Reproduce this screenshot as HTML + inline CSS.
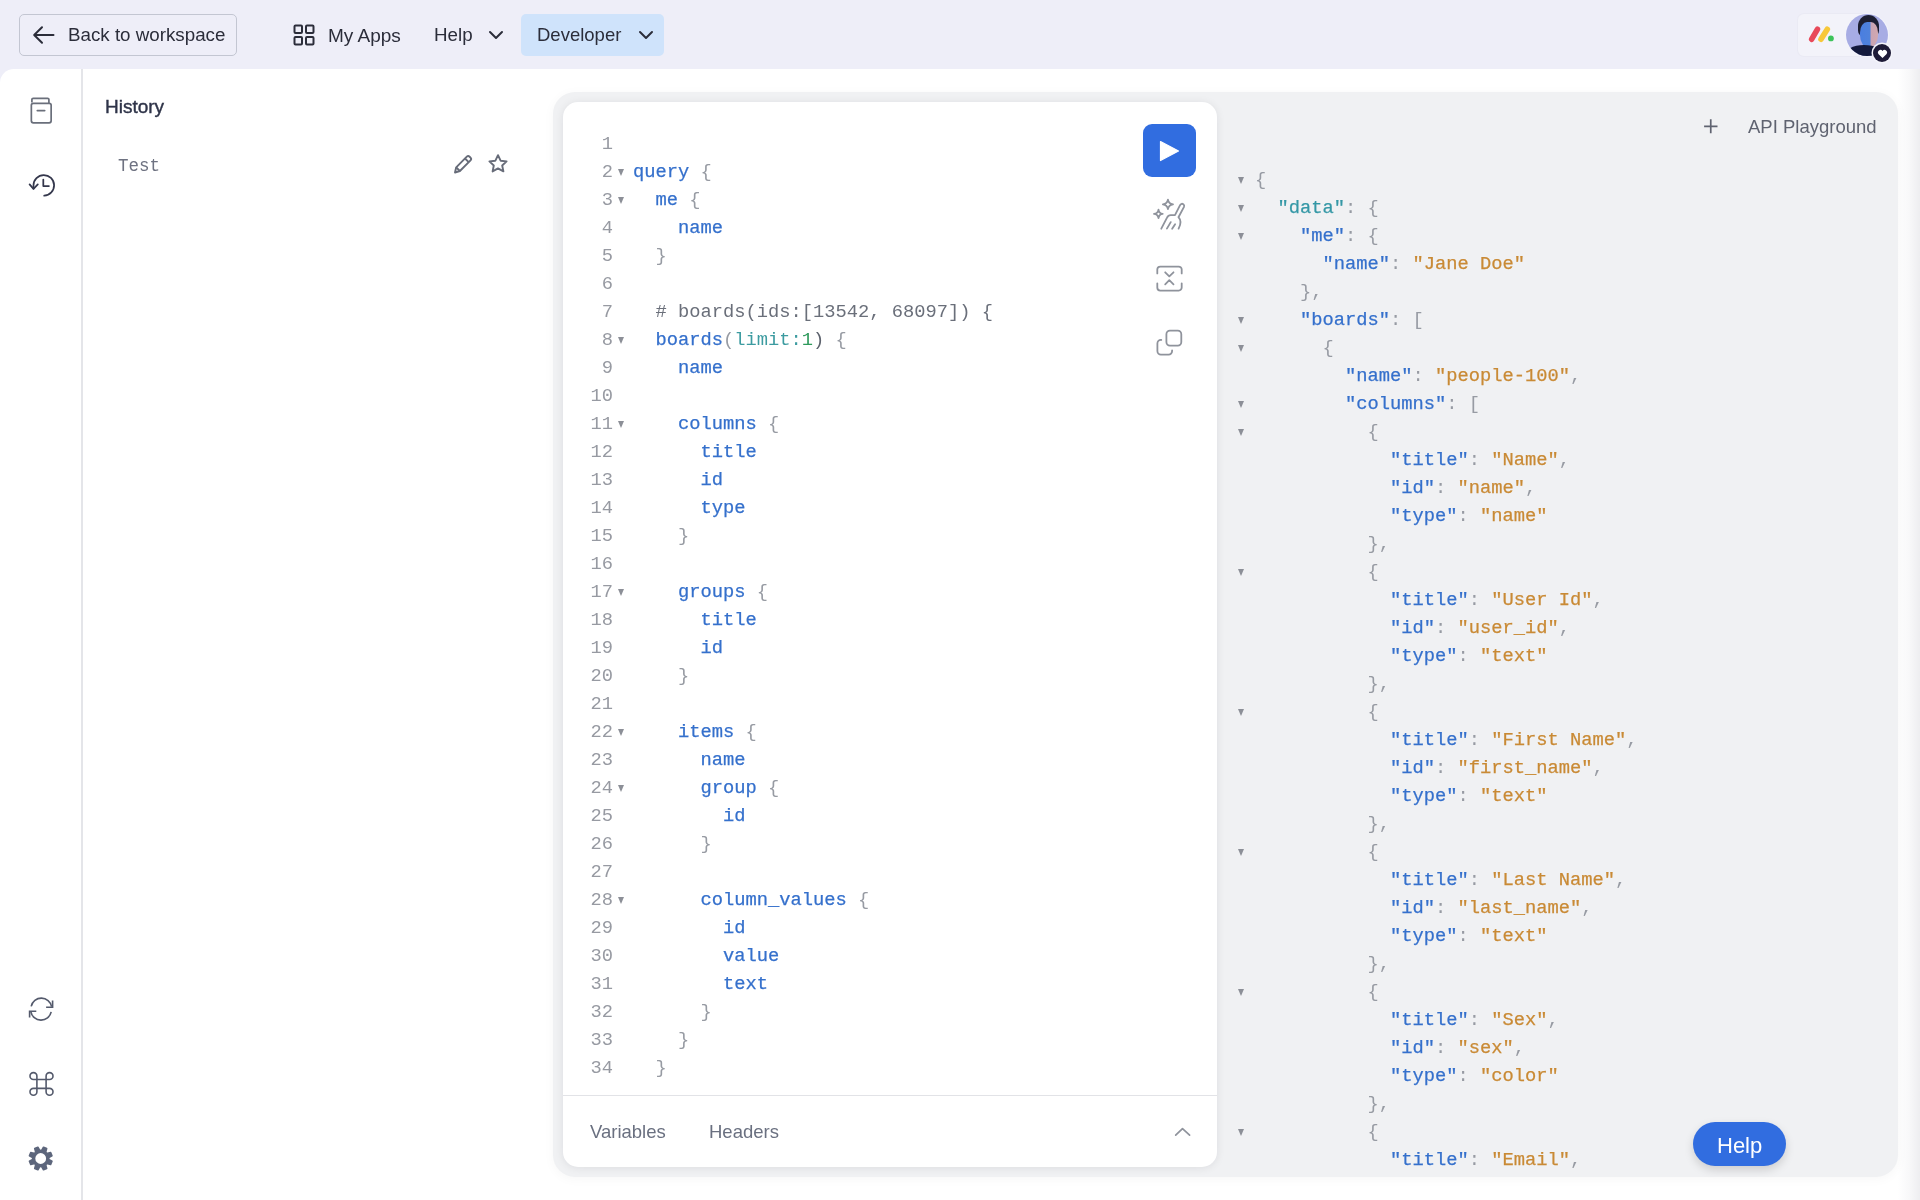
<!DOCTYPE html>
<html><head><meta charset="utf-8">
<style>
*{box-sizing:border-box;margin:0;padding:0}
html,body{width:1920px;height:1200px;overflow:hidden;-webkit-font-smoothing:antialiased;background:#eeeef8;font-family:"Liberation Sans",sans-serif;position:relative}
.abs{position:absolute}
.txt{position:absolute;white-space:pre;line-height:1;font-family:"Liberation Sans",sans-serif;will-change:transform}
#top{left:0;top:0;width:1920px;height:70px;background:#eeeef8}
#backbtn{left:19px;top:13.5px;width:218px;height:42px;border:1px solid #c3c6d2;border-radius:5px}
#devbtn{left:521px;top:13.5px;width:143px;height:42px;background:#cfe3fb;border-radius:5px}
#logobox{left:1797.5px;top:13.5px;width:75px;height:42.5px;background:#f3f3fa;border-radius:6px;box-shadow:0 0 0 1px rgba(225,226,238,0.35)}
#main{left:0;top:69px;width:1920px;height:1131px;background:#fff;border-top-left-radius:14px}
#rail{left:81px;top:69px;width:2px;height:1131px;background:#e4e5e9}
#outer{left:553px;top:92px;width:1344.5px;height:1084.7px;background:#f0f1f3;border-radius:22px;box-shadow:0 2px 12px rgba(0,0,0,0.035)}
#card{left:563px;top:102.3px;width:654px;height:1064.7px;background:#fff;border-radius:15px;box-shadow:0 1px 8px rgba(20,20,40,0.085)}
#divider{left:563px;top:1094.8px;width:654px;height:1.2px;background:#e2e3e7}
.code{position:absolute;font-family:"Liberation Mono",monospace;font-size:18.75px;line-height:28px;white-space:pre;color:#8e929a;will-change:transform}
.ln{color:#979aa2}
.k{color:#3570cc;-webkit-text-stroke:0.25px #3570cc}
.p{color:#979ba3}
.c{color:#6a6f7a}
.t{color:#3c9ba0}
.n{color:#2f9a5c}
.d{color:#5d626d}
.jk{color:#3570cc;-webkit-text-stroke:0.25px #3570cc}
.jd{color:#3598a6;-webkit-text-stroke:0.25px #3598a6}
.js{color:#c98a35;-webkit-text-stroke:0.25px #c98a35}
.tri{position:absolute;width:0;height:0;border-left:3.5px solid transparent;border-right:3.5px solid transparent;border-top:7px solid #8c8f97}
#play{left:1143px;top:124px;width:53px;height:53px;background:#316de0;border-radius:9px}
#help{left:1693px;top:1122px;width:93px;height:44px;background:#316de0;border-radius:22px;box-shadow:0 4px 10px rgba(0,0,0,0.15)}
</style></head><body>
<div id="top" class="abs"></div>
<div id="backbtn" class="abs"></div>
<svg class="abs" style="left:30px;top:22px" width="26" height="26" viewBox="0 0 26 26"><path d="M23.5 13H4.5M12 5.2L4.2 13l7.8 7.8" fill="none" stroke="#2b2d3a" stroke-width="2" stroke-linecap="round" stroke-linejoin="round"/></svg>
<div class="txt" style="left:68.3px;top:26.2px;font-size:18.75px;color:#2b2d3a">Back to workspace</div>
<svg class="abs" style="left:292px;top:23px" width="24" height="24" viewBox="0 0 24 24"><g fill="none" stroke="#2b2d3a" stroke-width="2"><rect x="2.5" y="2.5" width="7.5" height="7.5" rx="1"/><rect x="14" y="2.5" width="7.5" height="7.5" rx="1"/><rect x="2.5" y="14" width="7.5" height="7.5" rx="1"/><rect x="14" y="14" width="7.5" height="7.5" rx="1"/></g></svg>
<div class="txt" style="left:328px;top:26.1px;font-size:19px;color:#2b2d3a">My Apps</div>
<div class="txt" style="left:434px;top:26.2px;font-size:18.75px;color:#2b2d3a">Help</div>
<svg class="abs" style="left:487px;top:26px" width="18" height="18" viewBox="0 0 18 18"><path d="M3 6l6 6 6-6" fill="none" stroke="#2b2d3a" stroke-width="2" stroke-linecap="round" stroke-linejoin="round"/></svg>
<div id="devbtn" class="abs"></div>
<div class="txt" style="left:537px;top:26.3px;font-size:18.5px;color:#2b2d3a">Developer</div>
<svg class="abs" style="left:637px;top:26px" width="18" height="18" viewBox="0 0 18 18"><path d="M3 6l6 6 6-6" fill="none" stroke="#2b2d3a" stroke-width="2" stroke-linecap="round" stroke-linejoin="round"/></svg>
<div id="logobox" class="abs"></div>
<svg class="abs" style="left:1800px;top:20px" width="40" height="30" viewBox="0 0 40 30"><g stroke-linecap="round" stroke-width="5.6"><path d="M11.7 19.2L17.4 9.3" stroke="#e8495a"/><path d="M21 19.2L27.3 9.3" stroke="#f7c83a"/></g><circle cx="30.9" cy="18.4" r="2.9" fill="#3dc35a"/></svg>
<div class="abs" style="left:1845.5px;top:13.7px;width:42.5px;height:42.5px;border-radius:50%;background:#a7ace4;overflow:hidden;box-shadow:0 0 0 1px #f4f4fb">
<div class="abs" style="left:12.5px;top:1.5px;width:21px;height:22px;border-radius:50% 50% 30% 30%;background:#1d1f33;filter:blur(0.5px)"></div>
<div class="abs" style="left:14px;top:8px;width:18px;height:26px;border-radius:40% 40% 50% 50%;background:linear-gradient(90deg,#4a7ee0 0%,#4f82dc 55%,#c9a4b4 62%,#d2a8ae 100%);filter:blur(0.5px)"></div>
<div class="abs" style="left:-2px;top:31px;width:40px;height:22px;border-radius:50% 50% 0 0;background:#141a3c"></div>
</div>
<div class="abs" style="left:1872.9px;top:43.9px;width:18.2px;height:18.2px;border-radius:50%;background:#1e1b38;box-shadow:0 0 0 1.5px #f4f4fb"></div>
<svg class="abs" style="left:1876.5px;top:48.5px" width="11" height="10" viewBox="0 0 11 10"><path d="M5.5 9L1.6 5.2A2.4 2.4 0 0 1 5.5 1.9A2.4 2.4 0 0 1 9.4 5.2z" fill="#fff"/></svg>

<div id="main" class="abs"></div>
<div class="abs" style="left:1898px;top:69px;width:22px;height:1131px;background:linear-gradient(90deg,rgba(228,228,232,0) 0%,rgba(228,228,232,0.25) 50%,rgba(226,226,230,0.6) 100%)"></div>
<div id="rail" class="abs"></div>
<!-- rail icons -->
<svg class="abs" style="left:28px;top:95px" width="28" height="30" viewBox="0 0 28 30"><g fill="none" stroke="#6a6f7b" stroke-width="1.7" stroke-linejoin="round"><path d="M3.9 7.6V4.6a1.3 1.3 0 0 1 1.3-1.3H19.6a1.3 1.3 0 0 1 1.3 1.3V8"/><rect x="3.35" y="8.3" width="19.8" height="19.55" rx="2"/><path d="M9.3 15.6h7.4" stroke-linecap="round"/></g></svg>
<svg class="abs" style="left:26px;top:170px" width="32" height="32" viewBox="0 0 32 32"><g fill="none" stroke="#34374c" stroke-width="1.75" stroke-linecap="round" stroke-linejoin="round"><path d="M18.2 25.6A10.3 10.3 0 1 0 7.5 15.3V18.5"/><path d="M3.6 14.4l3.9 4.5 4.3-4.5"/><path d="M17.3 9.6v6.5h5.6"/></g></svg>
<svg class="abs" style="left:22px;top:990px" width="38" height="38" viewBox="0 0 38 38"><g fill="none" stroke="#545a6c" stroke-width="1.6" stroke-linecap="butt" stroke-linejoin="miter"><path d="M9.2 16.4A10.4 10.4 0 0 1 29.6 16.6"/><path d="M30.6 10.6V17.3H24.1"/><path d="M29.2 21.9A10.4 10.4 0 0 1 8.8 21.6"/><path d="M14.3 21.2H7.6V27.6"/></g></svg>
<svg class="abs" style="left:22px;top:1064px" width="38" height="38" viewBox="0 0 38 38"><path fill="none" stroke="#545a6c" stroke-width="1.6" stroke-linejoin="round" d="M14.9 15.5H24.1V24.4H14.9zM14.9 15.5V12.05A3.45 3.45 0 1 0 11.45 15.5H14.9M24.1 15.5V12.05A3.45 3.45 0 1 1 27.55 15.5H24.1M14.9 24.4V27.849999999999998A3.45 3.45 0 1 1 11.45 24.4H14.9M24.1 24.4V27.849999999999998A3.45 3.45 0 1 0 27.55 24.4H24.1"/></svg>
<svg class="abs" style="left:22px;top:1140px" width="38" height="38" viewBox="0 0 38 38"><path fill="#5d667c" stroke="#5d667c" stroke-width="1.6" stroke-linejoin="round" fill-rule="evenodd" d="M18.70 10.60 L19.97 9.99 L21.51 7.24 L24.67 8.56 L23.82 11.59 L24.29 12.91 L25.61 13.38 L28.64 12.53 L29.96 15.69 L27.21 17.23 L26.60 18.50 L27.21 19.77 L29.96 21.31 L28.64 24.47 L25.61 23.62 L24.29 24.09 L23.82 25.41 L24.67 28.44 L21.51 29.76 L19.97 27.01 L18.70 26.40 L17.43 27.01 L15.89 29.76 L12.73 28.44 L13.58 25.41 L13.11 24.09 L11.79 23.62 L8.76 24.47 L7.44 21.31 L10.19 19.77 L10.80 18.50 L10.19 17.23 L7.44 15.69 L8.76 12.53 L11.79 13.38 L13.11 12.91 L13.58 11.59 L12.73 8.56 L15.89 7.24 L17.43 9.99z M24.90 18.50A6.2 6.2 0 1 0 12.50 18.50A6.2 6.2 0 1 0 24.90 18.50z"/></svg>

<div class="txt" style="left:104.5px;top:97px;font-size:19px;color:#2e3348;-webkit-text-stroke:0.4px #2e3348">History</div>
<div class="code" style="left:117.5px;top:152px;font-size:17.5px;line-height:28px;color:#6e7281">Test</div>
<svg class="abs" style="left:451px;top:152px" width="24" height="24" viewBox="0 0 24 24"><g fill="none" stroke="#676c79" stroke-width="1.9" stroke-linejoin="round"><path d="M4 20.5l1.2-5.2L15.8 4.7a2 2 0 0 1 2.8 0l0.9 0.9a2 2 0 0 1 0 2.8L8.9 19z"/><path d="M14 6.5l3.7 3.7M5.2 15.3l3.7 3.7"/></g></svg>
<svg class="abs" style="left:486px;top:152px" width="24" height="24" viewBox="0 0 24 24"><path d="M12 3.2l2.6 5.5 6 0.7-4.4 4.1 1.2 5.9-5.4-3-5.4 3 1.2-5.9-4.4-4.1 6-0.7z" fill="none" stroke="#676c79" stroke-width="1.9" stroke-linejoin="round"/></svg>

<div id="outer" class="abs"></div>
<div id="card" class="abs"></div>
<div id="divider" class="abs"></div>
<div class="code ln" style="left:567.5px;top:129.9px;text-align:right;width:45px">1<br>2<br>3<br>4<br>5<br>6<br>7<br>8<br>9<br>10<br>11<br>12<br>13<br>14<br>15<br>16<br>17<br>18<br>19<br>20<br>21<br>22<br>23<br>24<br>25<br>26<br>27<br>28<br>29<br>30<br>31<br>32<br>33<br>34</div>
<div class="code" style="left:633.3px;top:129.9px"><br><span class="k">query</span> <span class="p">{</span><br>  <span class="k">me</span> <span class="p">{</span><br>    <span class="k">name</span><br>  <span class="p">}</span><br><br>  <span class="c"># boards(ids:[13542, 68097]) {</span><br>  <span class="k">boards</span><span class="p">(</span><span class="t">limit:</span><span class="n">1</span><span class="d">)</span> <span class="p">{</span><br>    <span class="k">name</span><br><br>    <span class="k">columns</span> <span class="p">{</span><br>      <span class="k">title</span><br>      <span class="k">id</span><br>      <span class="k">type</span><br>    <span class="p">}</span><br><br>    <span class="k">groups</span> <span class="p">{</span><br>      <span class="k">title</span><br>      <span class="k">id</span><br>    <span class="p">}</span><br><br>    <span class="k">items</span> <span class="p">{</span><br>      <span class="k">name</span><br>      <span class="k">group</span> <span class="p">{</span><br>        <span class="k">id</span><br>      <span class="p">}</span><br><br>      <span class="k">column_values</span> <span class="p">{</span><br>        <span class="k">id</span><br>        <span class="k">value</span><br>        <span class="k">text</span><br>      <span class="p">}</span><br>    <span class="p">}</span><br>  <span class="p">}</span></div>
<div class="tri" style="left:617.5px;top:169px"></div>
<div class="tri" style="left:617.5px;top:197px"></div>
<div class="tri" style="left:617.5px;top:337px"></div>
<div class="tri" style="left:617.5px;top:421px"></div>
<div class="tri" style="left:617.5px;top:589px"></div>
<div class="tri" style="left:617.5px;top:729px"></div>
<div class="tri" style="left:617.5px;top:785px"></div>
<div class="tri" style="left:617.5px;top:897px"></div>
<div id="play" class="abs"></div>
<svg class="abs" style="left:1157px;top:138px" width="26" height="26" viewBox="0 0 26 26"><path d="M3.5 3.5L21.5 13 3.5 22.5z" fill="#fff" stroke="#fff" stroke-width="1.2" stroke-linejoin="round"/></svg>
<!-- wand -->
<svg class="abs" style="left:1148px;top:192px" width="42" height="42" viewBox="0 0 42 42"><g fill="none" stroke="#8f939c" stroke-width="1.8" stroke-linejoin="round" stroke-linecap="round"><path d="M19.95 7.6Q20.6 11.8 25 12.4Q20.6 13 19.95 17.2Q19.3 13 14.9 12.4Q19.3 11.8 19.95 7.6z"/><path d="M10.5 17.6Q11 21.4 14.7 21.9Q11 22.4 10.5 26.2Q10 22.4 6 21.9Q10 21.4 10.5 17.6z"/><path d="M13.3 36.7L18.9 25.9Q20.2 23.1 22.75 23.1H26.95L32.2 12.9Q33.6 10.9 35.5 12.4Q36.6 13.4 36 14.9L30.45 25.2Q34.5 29.5 30.6 36.6"/><path d="M22.75 30.1L18.9 36.6M27.1 32.2L24.15 36.7"/></g></svg>
<!-- merge/copy -->
<svg class="abs" style="left:1150px;top:258px" width="40" height="104" viewBox="0 0 40 104"><g fill="none" stroke="#8f939c" stroke-width="1.8" stroke-linecap="round" stroke-linejoin="round"><path d="M7.3 15.4V11.6a3 3 0 0 1 3-3H28.7a3 3 0 0 1 3 3V15.4M7.3 25.3V29.6a3 3 0 0 0 3 3H28.7a3 3 0 0 0 3-3V25.3M15.2 14.3L19.3 18.4L23.5 14.3M15.2 26.3L19.3 22.2L23.5 26.3"/><rect x="16.4" y="72.7" width="14.9" height="14.9" rx="3.5"/><path d="M11.3 81.9H10.9a3.5 3.5 0 0 0-3.5 3.5V93.1a3.5 3.5 0 0 0 3.5 3.5H18.6a3.5 3.5 0 0 0 3.5-3.5V92.3"/></g></svg>
<div class="txt" style="left:590px;top:1122.7px;font-size:18.5px;color:#6a7080">Variables</div>
<div class="txt" style="left:708.5px;top:1122.7px;font-size:18.5px;color:#6a7080">Headers</div>
<svg class="abs" style="left:1172px;top:1122px" width="20" height="20" viewBox="0 0 20 20"><path d="M3.7 13.2L10.5 6.6 17.6 13.2" fill="none" stroke="#8f939c" stroke-width="1.7" stroke-linecap="round" stroke-linejoin="round"/></svg>

<svg class="abs" style="left:1700px;top:116px" width="22" height="22" viewBox="0 0 22 22"><path d="M10.75 3.3v14M4.1 10.3h13.4" stroke="#5f6370" stroke-width="1.7"/></svg>
<div class="txt" style="left:1748px;top:118.3px;font-size:18.5px;color:#5f6370">API Playground</div>
<div class="code" style="left:1254.5px;top:165.9px"><span class="p">{</span><br>  <span class="jd">&quot;data&quot;</span><span class="p">: {</span><br>    <span class="jk">&quot;me&quot;</span><span class="p">: {</span><br>      <span class="jk">&quot;name&quot;</span><span class="p">: </span><span class="js">&quot;Jane Doe&quot;</span><br>    <span class="p">},</span><br>    <span class="jk">&quot;boards&quot;</span><span class="p">: [</span><br>      <span class="p">{</span><br>        <span class="jk">&quot;name&quot;</span><span class="p">: </span><span class="js">&quot;people-100&quot;</span><span class="p">,</span><br>        <span class="jk">&quot;columns&quot;</span><span class="p">: [</span><br>          <span class="p">{</span><br>            <span class="jk">&quot;title&quot;</span><span class="p">: </span><span class="js">&quot;Name&quot;</span><span class="p">,</span><br>            <span class="jk">&quot;id&quot;</span><span class="p">: </span><span class="js">&quot;name&quot;</span><span class="p">,</span><br>            <span class="jk">&quot;type&quot;</span><span class="p">: </span><span class="js">&quot;name&quot;</span><br>          <span class="p">},</span><br>          <span class="p">{</span><br>            <span class="jk">&quot;title&quot;</span><span class="p">: </span><span class="js">&quot;User Id&quot;</span><span class="p">,</span><br>            <span class="jk">&quot;id&quot;</span><span class="p">: </span><span class="js">&quot;user_id&quot;</span><span class="p">,</span><br>            <span class="jk">&quot;type&quot;</span><span class="p">: </span><span class="js">&quot;text&quot;</span><br>          <span class="p">},</span><br>          <span class="p">{</span><br>            <span class="jk">&quot;title&quot;</span><span class="p">: </span><span class="js">&quot;First Name&quot;</span><span class="p">,</span><br>            <span class="jk">&quot;id&quot;</span><span class="p">: </span><span class="js">&quot;first_name&quot;</span><span class="p">,</span><br>            <span class="jk">&quot;type&quot;</span><span class="p">: </span><span class="js">&quot;text&quot;</span><br>          <span class="p">},</span><br>          <span class="p">{</span><br>            <span class="jk">&quot;title&quot;</span><span class="p">: </span><span class="js">&quot;Last Name&quot;</span><span class="p">,</span><br>            <span class="jk">&quot;id&quot;</span><span class="p">: </span><span class="js">&quot;last_name&quot;</span><span class="p">,</span><br>            <span class="jk">&quot;type&quot;</span><span class="p">: </span><span class="js">&quot;text&quot;</span><br>          <span class="p">},</span><br>          <span class="p">{</span><br>            <span class="jk">&quot;title&quot;</span><span class="p">: </span><span class="js">&quot;Sex&quot;</span><span class="p">,</span><br>            <span class="jk">&quot;id&quot;</span><span class="p">: </span><span class="js">&quot;sex&quot;</span><span class="p">,</span><br>            <span class="jk">&quot;type&quot;</span><span class="p">: </span><span class="js">&quot;color&quot;</span><br>          <span class="p">},</span><br>          <span class="p">{</span><br>            <span class="jk">&quot;title&quot;</span><span class="p">: </span><span class="js">&quot;Email&quot;</span><span class="p">,</span></div>
<div class="tri" style="left:1238px;top:177px"></div>
<div class="tri" style="left:1238px;top:205px"></div>
<div class="tri" style="left:1238px;top:233px"></div>
<div class="tri" style="left:1238px;top:317px"></div>
<div class="tri" style="left:1238px;top:345px"></div>
<div class="tri" style="left:1238px;top:401px"></div>
<div class="tri" style="left:1238px;top:429px"></div>
<div class="tri" style="left:1238px;top:569px"></div>
<div class="tri" style="left:1238px;top:709px"></div>
<div class="tri" style="left:1238px;top:849px"></div>
<div class="tri" style="left:1238px;top:989px"></div>
<div class="tri" style="left:1238px;top:1129px"></div>
<div id="help" class="abs"></div>
<div class="txt" style="left:1717px;top:1134.5px;font-size:22px;color:#fff">Help</div>
</body></html>
